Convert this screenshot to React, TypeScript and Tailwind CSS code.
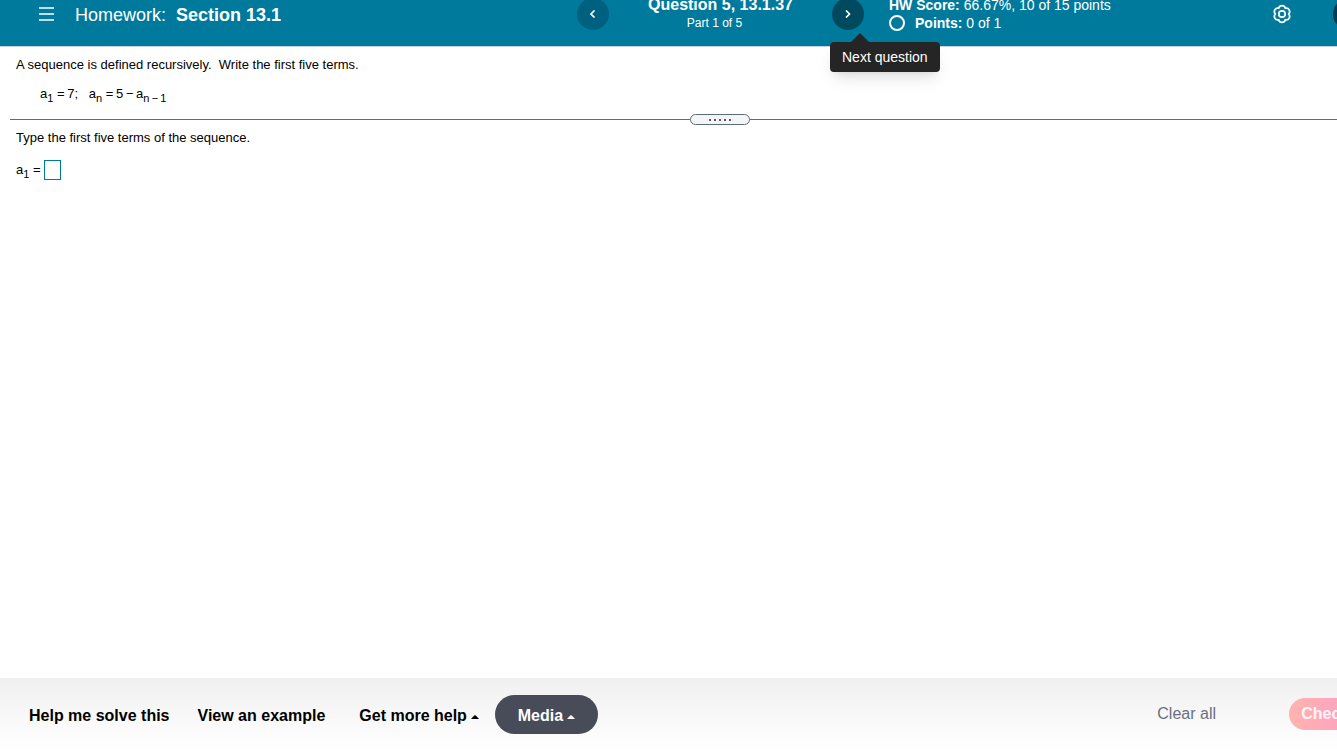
import type { ReactNode } from "react";

function Sub({ children }: { children: ReactNode }) {
  return <span className="relative top-1 text-[11px] leading-none">{children}</span>;
}

function Caret() {
  return (
    <svg viewBox="0 0 8 4" className="mt-0.5 h-1 w-2" fill="currentColor" aria-hidden="true">
      <path d="M0 4 L3.2 .5 Q4 -.2 4.8 .5 L8 4Z" />
    </svg>
  );
}

function Chevron({ d }: { d: string }) {
  return (
    <svg viewBox="0 0 8 8" className="h-2 w-2" fill="none" stroke="currentColor" strokeWidth="1.7" aria-hidden="true">
      <path d={d} />
    </svg>
  );
}

function Gear() {
  return (
    <svg viewBox="0 0 20 20" className="size-5" fill="none" stroke="currentColor" strokeWidth="1.7" strokeLinejoin="round" aria-hidden="true">
      <path d="M16.6 10A3.4 3.4 0 0 1 13.3 15.72A3.4 3.4 0 0 1 6.7 15.72A3.4 3.4 0 0 1 3.4 10A3.4 3.4 0 0 1 6.7 4.28A3.4 3.4 0 0 1 13.3 4.28A3.4 3.4 0 0 1 16.6 10Z" />
      <circle cx="10" cy="10" r="3.2" />
    </svg>
  );
}

function Header() {
  return (
    <header className="-mt-[18px] grid h-[65px] grid-cols-[1fr_287px_1fr] items-center border-b border-[#c7d3e0] bg-[#007a9c] text-white">
      <div className="flex items-center pl-[39px]">
        <button aria-label="Menu" className="mr-5">
          <svg viewBox="0 0 16 14" className="h-3.5 w-4" stroke="currentColor" strokeWidth="1.6" aria-hidden="true">
            <path d="M0 1H15M0 7H15M0 13H15" />
          </svg>
        </button>
        <h1 className="flex gap-2.5 pt-0.5 text-lg">
          Homework: <b>Section 13.1</b>
        </h1>
      </div>
      <nav className="flex items-center justify-between">
        <button aria-label="Previous question" className="flex size-8 items-center justify-center rounded-full bg-[#00607f]">
          <Chevron d="M5.5 .5 L2 4 L5.5 7.5" />
        </button>
        <div className="pb-0.5 text-center">
          <div className="text-base leading-5 font-bold">Question 5, 13.1.37</div>
          <div className="pr-3 text-xs leading-4">Part 1 of 5</div>
        </div>
        <div className="relative">
          <button aria-label="Next question" className="flex size-8 items-center justify-center rounded-full bg-[#004a60]">
            <Chevron d="M2 .5 L5.5 4 L2 7.5" />
          </button>
          <div role="tooltip" className="absolute top-11 -left-0.5 z-10 rounded bg-[#252525] px-3 py-1 text-sm leading-[22px] whitespace-nowrap shadow-lg">
            <svg viewBox="0 0 18 9" className="absolute -top-[9px] left-[21px] h-[9px] w-[18px] fill-[#252525]" aria-hidden="true">
              <path d="M0 9L9 0L18 9Z" />
            </svg>
            Next question
          </div>
        </div>
      </nav>
      <div className="flex items-center pl-[25px]">
        <div className="flex-1 text-sm leading-[18px]">
          <div><b>HW Score:</b> 66.67%, 10 of 15 points</div>
          <div className="flex items-center gap-2.5">
            <span className="size-4 rounded-full border-2 border-white" />
            <span><b>Points:</b> 0 of 1</span>
          </div>
        </div>
        <button aria-label="Settings" className="mr-[41px]">
          <Gear />
        </button>
        <button aria-label="Help" className="mr-[76px] size-8 rounded-full bg-[#003b4f]" />
      </div>
    </header>
  );
}

export default function App() {
  return (
    <div className="min-h-screen overflow-hidden bg-white font-['Liberation_Sans',Arial,sans-serif] text-black">
      <div className="flex min-h-screen w-[calc(100%+104px)] flex-col">
        <Header />
        <main className="flex-1 text-[13px] leading-4">
          <section className="px-4 pt-[10px] pb-3">
            <p className="whitespace-pre">A sequence is defined recursively.  Write the first five terms.</p>
            <p className="mt-[13px] pl-6 whitespace-pre">
              a<Sub>1</Sub> ={"\u2009"}7;   a<Sub>n</Sub> ={"\u2009"}5{"\u2009−\u2009"}a<Sub>n{"\u2009−\u2009"}1</Sub>
            </p>
          </section>
          <div className="flex h-[11px] items-center pl-2.5">
            <div className="h-px flex-1 bg-[#5c6b7c]" />
            <button aria-label="Resize panels" className="flex h-[11px] w-[60px] items-center justify-center gap-[3px] rounded-full border border-[#5c6b7c] bg-[#f3f5f7]">
              <i className="size-0.5 bg-[#555b66]" />
              <i className="size-0.5 bg-[#555b66]" />
              <i className="size-0.5 bg-[#555b66]" />
              <i className="size-0.5 bg-[#555b66]" />
              <i className="size-0.5 bg-[#555b66]" />
            </button>
            <div className="mr-3 h-px flex-1 bg-[#5c6b7c]" />
          </div>
          <section className="px-4 pt-[5px]">
            <p>Type the first five terms of the sequence.</p>
            <label className="mt-3.5 flex items-center gap-[3px]">
              <span>a<Sub>1</Sub> =</span>
              <input className="h-5 w-[17px] border border-[#007a9c] outline-none" />
            </label>
          </section>
        </main>
        <footer className="flex h-[72px] items-center bg-linear-to-b from-[#f0f0f0] to-white pl-[29px] text-base font-bold">
          <button className="mr-7 pt-[3px]">Help me solve this</button>
          <button className="mr-[34px] pt-[3px]">View an example</button>
          <button className="mr-4 flex items-center gap-1 pt-[3px]">Get more help <Caret /></button>
          <button className="flex h-[39px] w-[103px] items-center justify-center gap-1 rounded-full bg-[#484c59] pt-[3px] text-white">
            Media <Caret />
          </button>
          <button className="mr-[73px] ml-auto font-normal text-[#6a7080]">Clear all</button>
          <button className="mr-5 h-8 w-[132px] rounded-full bg-linear-to-r from-[#ffb3ae] via-[#ff9fc4] to-[#ff9fc4] text-[#fff5f8]">
            Check answer
          </button>
        </footer>
      </div>
    </div>
  );
}
